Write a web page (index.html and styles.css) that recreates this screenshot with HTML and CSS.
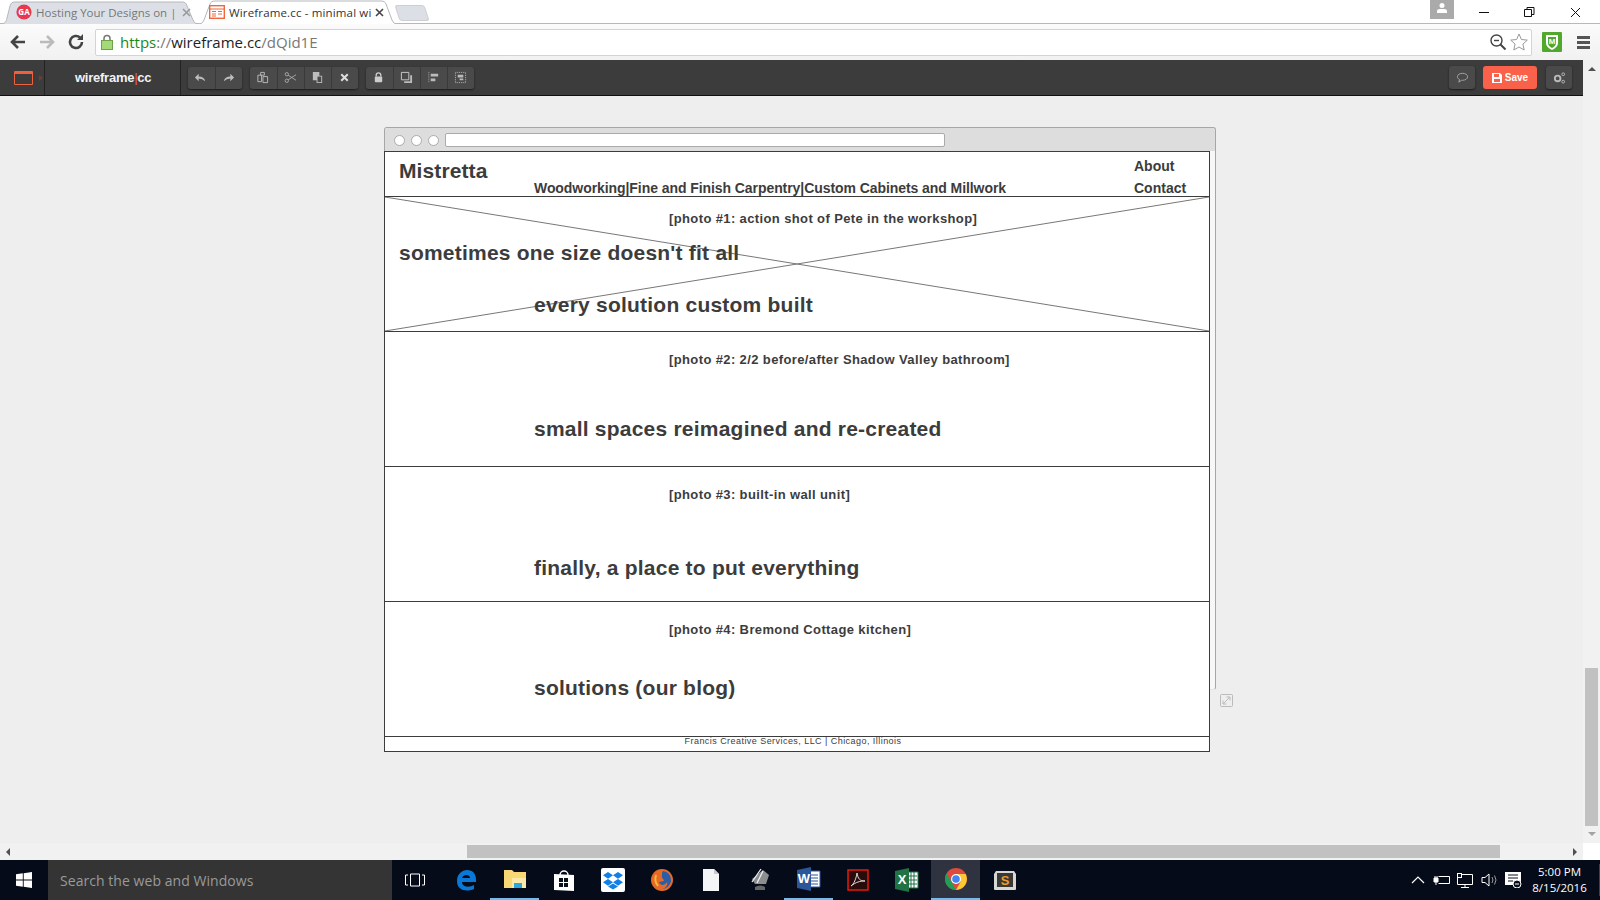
FILE: index.html
```html
<!DOCTYPE html>
<html lang="en">
<head>
    <meta charset="UTF-8">
    <title>Wireframe.cc - minimal wireframing tool</title>
    <link rel="stylesheet" href="styles.css">
</head>
<body>
    <div class="tabstrip">
        <div class="tab tab-off">
            <svg class="tab-shape" viewBox="0 0 200 24" preserveAspectRatio="none"><path d="M0 24 C5 24 6 22 7 18 L10 6 C11 3 12 2 15 2 H182 C185 2 186 3 187 6 L193 20 C194 23 196 24 200 24" fill="#dce0e6" stroke="#b4b7bb"/></svg>
            <svg class="favicon" viewBox="0 0 16 16"><circle cx="8" cy="8" r="7.6" fill="#e8384f"/><text x="8" y="11" class="favicon-text">GA</text></svg>
            <span class="tab-title tab-title-off">Hosting Your Designs on |</span>
            <svg class="tab-close" viewBox="0 0 9 9"><path d="M1 1l7 7M8 1L1 8" stroke="#999" stroke-width="1.600"/></svg>
        </div>
        <div class="tab tab-on">
            <svg class="tab-shape" viewBox="0 0 201 24" preserveAspectRatio="none"><path d="M0 24 C4 24 6 23 7 20 L13 4 C14 2 15 1 18 1 H184 C187 1 188 2 189 4 L195 20 C196 23 198 24 201 24" fill="#fff" stroke="#b4b7bb"/></svg>
            <svg class="favicon" viewBox="0 0 16 16"><rect x=".7" y="1.7" width="14.6" height="12.6" fill="#fff" stroke="#f0673d" stroke-width="1.4"/><path d="M1 5h14M3 7.5h4M3 10h4M3 12h4M9 7.5h4M9 10h4" stroke="#f0673d"/></svg>
            <span class="tab-title">Wireframe.cc - minimal wi</span>
            <svg class="tab-close" viewBox="0 0 9 9"><path d="M1 1l7 7M8 1L1 8" stroke="#444" stroke-width="1.600"/></svg>
        </div>
        <div class="new-tab"></div>
        <div class="window-controls">
            <div class="user-badge"><svg viewBox="0 0 12 12" width="12" height="12"><circle cx="6" cy="3.5" r="2.5" fill="#fff"/><path d="M1 11V9q0-2 3-2h4q3 0 3 2v2z" fill="#fff"/></svg></div>
            <svg class="win-btn" viewBox="0 0 46 24"><path d="M19 12.500h10" stroke="#111"/></svg>
            <svg class="win-btn" viewBox="0 0 46 24"><path d="M18.500 9.500h7v7h-7zM21 9V7.500h7v7h-2" fill="none" stroke="#111"/></svg>
            <svg class="win-btn" viewBox="0 0 46 24"><path d="M19 8l9 9M28 8l-9 9" stroke="#111"/></svg>
        </div>
    </div>

    <div class="toolbar">
        <svg class="nav-icon" viewBox="0 0 20 20"><path d="M17 10H5M10 4l-6 6 6 6" fill="none" stroke="#444" stroke-width="2.600"/></svg>
        <svg class="nav-icon" viewBox="0 0 20 20"><path d="M3 10h12M10 4l6 6-6 6" fill="none" stroke="#bbb" stroke-width="2.600"/></svg>
        <svg class="nav-icon" viewBox="0 0 20 20"><path d="M16 10a6 6 0 1 1-2-4.500" fill="none" stroke="#444" stroke-width="2.600"/><path d="M11 8h6V2z" fill="#444"/></svg>
        <div class="omnibox">
            <svg class="lock" viewBox="0 0 12 16"><path d="M3 7V4.500a3 3 0 0 1 6 0V7" fill="none" stroke="#777" stroke-width="1.500"/><rect x=".5" y="6.500" width="11" height="9" fill="#a3d977" stroke="#6fa04a"/></svg>
            <span class="url"><span class="url-scheme">https</span><span class="url-dim">://</span>wireframe.cc<span class="url-dim">/dQid1E</span></span>
            <svg class="omni-icon omni-zoom" viewBox="0 0 18 18"><circle cx="7.500" cy="7.500" r="5.500" fill="none" stroke="#444" stroke-width="1.400"/><path d="M5 7.500h5" stroke="#444" stroke-width="1.400"/><path d="M11.500 11.500l5 5" stroke="#444" stroke-width="2"/></svg>
            <svg class="omni-icon" viewBox="0 0 18 18"><path d="M9 1l2.400 5.500 5.900.6-4.400 4 1.300 5.900L9 14l-5.200 3 1.300-5.900-4.400-4 5.900-.6z" fill="#fff" stroke="#999"/></svg>
        </div>
        <svg class="shield" viewBox="0 0 20 20"><rect width="20" height="20" rx="1" fill="#52a82d"/><path d="M4 3h12v8q0 4-6 7-6-3-6-7z" fill="#fff"/><path d="M6 5h8v6q0 3-4 5-4-2-4-5z" fill="#52a82d"/><text x="10" y="12" class="shield-text">M</text></svg>
        <div class="menu-icon"><i></i><i></i><i></i></div>
    </div>

    <div class="viewport">
        <div class="app">
            <div class="appbar">
                <div class="app-logo">
                    <span class="app-logo-box"></span>
                    <span class="app-logo-arrow"></span>
                </div>
                <div class="app-name">wireframe<span class="app-name-bar">|</span>cc</div>
                <div class="tool-group">
                    <div class="tool"><svg viewBox="0 0 14 14"><path d="M12 11Q11 6 5 6V3L1 7l4 4V8q4 0 7 3z"/></svg></div>
                    <div class="tool"><svg viewBox="0 0 14 14"><path d="M2 11q1-5 7-5V3l4 4-4 4V8q-4 0-7 3z"/></svg></div>
                </div>
                <div class="tool-group">
                    <div class="tool"><svg viewBox="0 0 14 14"><path d="M5 1.500h4v3H5zM2 4.500h4v7H2zM7.500 6h5v6.500h-5z" fill="none" stroke="#bbb"/></svg></div>
                    <div class="tool"><svg viewBox="0 0 14 14"><circle cx="3" cy="3.500" r="1.800" fill="none" stroke="#aaa"/><circle cx="3" cy="10.500" r="1.800" fill="none" stroke="#aaa"/><path d="M4.500 4.500L13 10M4.500 9.500L13 4" stroke="#aaa"/></svg></div>
                    <div class="tool"><svg viewBox="0 0 14 14"><path d="M2 1h7v4h3v8H6v-3H2z"/><path d="M7 6h4v6H7z" fill="#4a4a4a"/></svg></div>
                    <div class="tool"><svg viewBox="0 0 14 14"><path d="M3.500 3.500l7 7M10.500 3.500l-7 7" stroke="#ddd" stroke-width="2.200"/></svg></div>
                </div>
                <div class="tool-group">
                    <div class="tool"><svg viewBox="0 0 14 14"><path d="M4.500 6V4.500a2.500 2.500 0 0 1 5 0V6" fill="none" stroke="#ccc" stroke-width="1.400"/><rect x="3" y="6" width="8" height="6" rx="1" fill="#ccc"/></svg></div>
                    <div class="tool"><svg viewBox="0 0 14 14"><path d="M1.500 1.500h8v8h-8z" fill="none" stroke="#ccc"/><path d="M11 4.500h2v8.500H4.500v-2H11z" fill="#bbb"/></svg></div>
                    <div class="tool"><svg viewBox="0 0 14 14"><path d="M2 1v12" stroke="#aaa" stroke-dasharray="1 1"/><path d="M4 3h8v3H4zM4 8h5v3H4z" fill="#bbb"/></svg></div>
                    <div class="tool"><svg viewBox="0 0 14 14"><path d="M1.500 1.500h11v11h-11z" fill="none" stroke="#bbb" stroke-dasharray="1 1"/><path d="M4 4h6v3H4zM6 8h4v2H6z" fill="#bbb"/></svg></div>
                </div>
                <div class="appbar-right">
                    <div class="tool tool-single"><svg viewBox="0 0 14 14"><path d="M7 2.500c3 0 5.500 1.500 5.500 3.700S10 10 7 10l-1 0-3 2 .8-2.800C2.300 8.500 1.500 7.400 1.500 6.200 1.500 4 4 2.500 7 2.500z" fill="none" stroke="#aaa"/></svg></div>
                    <div class="save-btn"><svg viewBox="0 0 10 10" width="10" height="10"><path d="M0 0h8l2 2v8H0z" fill="#fff"/><path d="M2 1h5v3H2zM2 6h6v3H2z" fill="#f9614a"/></svg>Save</div>
                    <div class="tool tool-single tool-settings"><svg viewBox="0 0 14 14"><circle cx="5" cy="8" r="3" fill="none" stroke="#bbb" stroke-width="2"/><circle cx="11" cy="11.500" r="1.500" fill="none" stroke="#bbb"/><circle cx="11" cy="3.500" r="1.500" fill="none" stroke="#bbb"/></svg></div>
                </div>
            </div>
            <div class="canvas">
                <div class="sketch-window">
                    <div class="sketch-titlebar">
                        <i class="sketch-dot"></i><i class="sketch-dot"></i><i class="sketch-dot"></i>
                        <div class="sketch-address"></div>
                    </div>
                </div>
                <div class="sketch-page">
                    <div class="site-header">
                        <div class="brand">Mistretta</div>
                        <div class="services">Woodworking|Fine and Finish Carpentry|Custom Cabinets and Millwork</div>
                        <div class="site-nav">
                            <div>About</div>
                            <div>Contact</div>
                        </div>
                    </div>
                    <div class="band">
                        <svg class="placeholder-x" viewBox="0 0 100 100" preserveAspectRatio="none"><path d="M0 0L100 100M0 100L100 0" stroke="#777" stroke-width="1" vector-effect="non-scaling-stroke" fill="none"/></svg>
                        <div class="caption">[photo #1: action shot of Pete in the workshop]</div>
                        <div class="headline headline-left">sometimes one size doesn't fit all</div>
                        <div class="headline headline-second">every solution custom built</div>
                    </div>
                    <div class="band">
                        <div class="caption caption-low">[photo #2: 2/2 before/after Shadow Valley bathroom]</div>
                        <div class="headline headline-a">small spaces reimagined and re-created</div>
                    </div>
                    <div class="band">
                        <div class="caption caption-low">[photo #3: built-in wall unit]</div>
                        <div class="headline headline-b">finally, a place to put everything</div>
                    </div>
                    <div class="band">
                        <div class="caption caption-low">[photo #4: Bremond Cottage kitchen]</div>
                        <div class="headline headline-c">solutions (our blog)</div>
                    </div>
                    <div class="site-footer">Francis Creative Services, LLC | Chicago, Illinois</div>
                </div>
                <svg class="resize-handle" viewBox="0 0 13 13"><rect x=".5" y=".5" width="12" height="12" rx="1" fill="none" stroke="#bbb"/><path d="M3 10l7-7M6.500 3H10v3.500M3 6.500V10h3.500" fill="none" stroke="#bbb"/></svg>
            </div>
        </div>
        <div class="vscroll">
            <span class="arrow-up"></span>
            <div class="vscroll-track"><div class="vscroll-thumb"></div></div>
            <span class="arrow-down"></span>
        </div>
    </div>
    <div class="hscroll">
        <span class="arrow-left"></span>
        <div class="hscroll-track"><div class="hscroll-thumb"></div></div>
        <span class="arrow-right"></span>
        <div class="scroll-corner"></div>
    </div>

    <div class="taskbar">
        <div class="start"><svg viewBox="0 0 16 16" width="16" height="16"><path d="M0 2.300l6.800-1v6.200H0zM7.700 1.200L16 0v7.500H7.700zM0 8.500h6.800v6.200l-6.800-1zM7.700 8.500H16V16l-8.300-1.200z" fill="#fff"/></svg></div>
        <div class="search">Search the web and Windows</div>
        <div class="task-items">
            <div class="task task-view"><svg viewBox="0 0 20 14" width="20" height="14"><path d="M5.500 1h9v12h-9zM3 2H.500v10H3M17 2h2.500v10H17" fill="none" stroke="#fff"/></svg></div>
            <div class="task"><svg viewBox="0 0 22 22" width="22" height="22"><path d="M2 12C2 5 7 1 12 1c6 0 9 4 9 10v2H7c0 5 7 6 12 3v4c-7 3-17 2-17-8zm5-3h8c0-4-7-4-8 0z" fill="#0a78d7"/></svg></div>
            <div class="task task-open"><svg viewBox="0 0 24 20" width="24" height="20"><path d="M1 1h8l2 2h12v16H1z" fill="#f8d775"/><path d="M9 9h14v10H9z" fill="#fbe9a8"/><path d="M11 14h8v5h-8z" fill="#2aa6e0"/></svg></div>
            <div class="task"><svg viewBox="0 0 22 24" width="22" height="24"><path d="M7 7a4 4 0 0 1 8 0" fill="none" stroke="#fff" stroke-width="1.500"/><path d="M1 6l20 1v16L1 22z" fill="#fff"/><path d="M6 10h4v4H6zM11 10h4v4h-4zM6 15h4v4H6zM11 15h4v4h-4z" fill="#0a0f1e"/></svg></div>
            <div class="task"><svg viewBox="0 0 24 24" width="24" height="24"><rect width="24" height="24" rx="2" fill="#fff"/><path d="M7 4l5 3.300-5 3.400L2 7.300zM17 4l5 3.300-5 3.400-5-3.400zM7 11l5 3.300-5 3.400-5-3.400zM17 11l5 3.300-5 3.400-5-3.400zM7 18.600l5-3 5 3-5 3z" fill="#1080e8"/></svg></div>
            <div class="task"><svg viewBox="0 0 22 22" width="22" height="22"><circle cx="11" cy="11" r="11" fill="#e66a25"/><path d="M12 2a9 9 0 0 1 8 10c-1 5-5 8-9 8 4-1 6-4 5-7-1 2-3 3-5 3-2-1-3-2-3-3l5-1c0-2-3-3-2-6 0-2 0-3 1-4z" fill="#2a5ea8"/><path d="M5 6q-2 6 2 11" stroke="#f6b73c" stroke-width="2" fill="none"/></svg></div>
            <div class="task"><svg viewBox="0 0 16 22" width="16" height="22"><path d="M0 0h11l5 5v17H0z" fill="#f4f5f7"/><path d="M11 0v5h5z" fill="#c8cace"/></svg></div>
            <div class="task"><svg viewBox="0 0 22 24" width="22" height="24"><path d="M3 11L14 2l6 5-3 9H6z" fill="#8b8d90"/><path d="M3 14L12 1M8 15l6-12" stroke="#eee" stroke-width="1.300"/><path d="M6 19q5-3 10 0v3H6z" fill="#666"/></svg></div>
            <div class="task task-open"><svg viewBox="0 0 24 24" width="24" height="24"><path d="M9 4h14v16H9z" fill="#fff" stroke="#2b579a"/><path d="M12 8h9M12 11h9M12 14h9M12 17h9" stroke="#2b579a"/><path d="M0 3l14-3v24L0 21z" fill="#2b579a"/><text x="7" y="16" class="tile-letter">W</text></svg></div>
            <div class="task"><svg viewBox="0 0 22 22" width="22" height="22"><rect x="1" y="1" width="20" height="20" fill="#2a0b0b" stroke="#e31b0c" stroke-width="1.500"/><path d="M4 17c3-2 5-7 6-13 1 6 3 8 8 8-5 0-9 1-14 5z" fill="none" stroke="#ddd"/></svg></div>
            <div class="task"><svg viewBox="0 0 24 24" width="24" height="24"><path d="M10 4h13v16H10z" fill="#fff" stroke="#217346"/><path d="M13 8h9M13 12h9M13 16h9M16 4v16M19 4v16" stroke="#217346"/><path d="M0 3l14-3v24L0 21z" fill="#217346"/><text x="7" y="16" class="tile-letter">X</text></svg></div>
            <div class="task task-open task-active"><svg viewBox="0 0 22 22" width="22" height="22"><circle cx="11" cy="11" r="11" fill="#de4b3e"/><path d="M11 6h9.700A11 11 0 0 1 11 22l4.500-8z" fill="#fcc934"/><path d="M11 22A11 11 0 0 1 1.500 5.500L6.500 14z" fill="#1f9e55"/><circle cx="11" cy="11" r="5" fill="#fff"/><circle cx="11" cy="11" r="3.800" fill="#4285f4"/></svg></div>
            <div class="task"><svg viewBox="0 0 22 20" width="22" height="20"><path d="M2 1h18l2 3v15q0 1-1 1H1q-1 0-1-1V4z" fill="#d8d8d6"/><rect x="3" y="3" width="16" height="14" fill="#3b3934"/><text x="11" y="14.500" class="tile-sublime">S</text></svg></div>
        </div>
        <div class="tray">
            <svg class="tray-chevron" viewBox="0 0 14 8" width="14" height="8"><path d="M1 7l6-6 6 6" fill="none" stroke="#fff" stroke-width="1.200"/></svg>
            <svg viewBox="0 0 18 12" width="18" height="12"><path d="M5.500 2.500h11v7h-11" fill="none" stroke="#fff"/><path d="M1 4h4v4H1zM2 2v2M4 2v2M3 8v3" stroke="#fff" fill="#fff"/></svg>
            <svg viewBox="0 0 18 15" width="18" height="15"><path d="M.500 1.500h15v10H.500zM8 11.500v3M4 14.500h8" fill="none" stroke="#fff"/><rect x=".5" y=".5" width="4" height="4" fill="#0a0f1e" stroke="#fff"/></svg>
            <svg viewBox="0 0 18 14" width="18" height="14"><path d="M1 4.500h3L8 1v12L4 9.500H1z" fill="none" stroke="#fff"/><path d="M11 4q2 3 0 6M13.500 2.500q3 4.500 0 9" fill="none" stroke="#999"/></svg>
            <svg viewBox="0 0 17 16" width="17" height="16"><path d="M0 0h16v13H0z" fill="#fff"/><path d="M3 3h10M3 6h10M3 9h5" stroke="#0a0f1e"/><circle cx="12" cy="12" r="4" fill="#0a0f1e" stroke="#fff"/><path d="M10 12h4" stroke="#fff"/></svg>
        </div>
        <div class="clock">
            <div>5:00 PM</div>
            <div>8/15/2016</div>
        </div>
    </div>
</body>
</html>
```

FILE: styles.css
```css
* {
    box-sizing: border-box;
}
body {
    margin: 0;
    width: 1600px;
    height: 900px;
    overflow: hidden;
    display: flex;
    flex-direction: column;
    background-color: #eeeeee;
    font-family: "Liberation Sans", Arial, sans-serif;
}

/* browser chrome */
.tabstrip {
    height: 24px;
    display: flex;
    align-items: flex-end;
    background-color: #ffffff;
    box-shadow: inset 0 -1px #b8b8b8;
    flex: none;
}
.tab {
    height: 24px;
    display: flex;
    align-items: center;
    position: relative;
    font-family: "Open Sans", sans-serif;
    font-size: 11.5px;
    white-space: nowrap;
}
.tab-off {
    width: 200px;
    padding-left: 16px;
}
.tab-on {
    width: 201px;
    margin-left: -3px;
    padding-left: 12px;
}
.tab-shape {
    position: absolute;
    left: 0;
    top: 0;
    width: 100%;
    height: 24px;
}
.favicon {
    width: 16px;
    height: 16px;
    position: relative;
    flex: none;
}
.favicon-text {
    font-size: 8px;
    font-weight: bold;
    fill: #fff;
    text-anchor: middle;
}
.tab-title {
    position: relative;
    margin-left: 4px;
    width: 140px;
    color: #333;
    letter-spacing: 0.15px;
}
.tab-title-off {
    color: #777;
    letter-spacing: 0;
}
.tab-close {
    position: relative;
    margin-left: 6px;
    width: 9px;
    height: 9px;
}
.new-tab {
    width: 30px;
    height: 16px;
    margin: 0 0 3px -1px;
    background-color: #dce0e6;
    border: 1px solid #cbced3;
    border-radius: 3px;
    transform: skewX(18deg);
}
.window-controls {
    margin-left: auto;
    height: 24px;
    display: flex;
    align-items: flex-start;
    padding-right: 2px;
}
.user-badge {
    width: 24px;
    height: 19px;
    margin-right: 6px;
    background-color: #aaaaaa;
    display: flex;
    justify-content: center;
    padding-top: 2px;
}
.win-btn {
    width: 46px;
    height: 24px;
}

.toolbar {
    height: 36px;
    flex: none;
    display: flex;
    align-items: center;
    padding-left: 8px;
    background: linear-gradient(#fbfbfb, #f1f1f1);
}
.nav-icon {
    width: 20px;
    height: 20px;
    margin-right: 9px;
}
.omnibox {
    width: 1437px;
    height: 27px;
    display: flex;
    align-items: center;
    padding: 0 3px 0 5px;
    background-color: #ffffff;
    border: 1px solid #d4d4d4;
    border-radius: 2px;
}
.lock {
    width: 12px;
    height: 16px;
    flex: none;
}
.url {
    margin: 0 0 1px 7px;
    font-family: "Open Sans", sans-serif;
    font-size: 15px;
    color: #222;
}
.url-scheme {
    color: #1a8a1a;
}
.url-dim {
    color: #777;
}
.omni-icon {
    width: 18px;
    height: 18px;
    margin-left: 3px;
}
.omni-zoom {
    margin-left: auto;
}
.shield {
    width: 20px;
    height: 20px;
    margin-left: 10px;
}
.shield-text {
    font-size: 8px;
    font-weight: bold;
    fill: #fff;
    text-anchor: middle;
}
.menu-icon {
    margin-left: 15px;
    width: 13px;
    display: flex;
    flex-direction: column;
    gap: 2px;
}
.menu-icon i {
    display: block;
    height: 3px;
    background-color: #555;
}

/* wireframe.cc bar */
.viewport {
    flex: 1;
    display: flex;
    min-height: 0;
}
.app {
    flex: 1;
    display: flex;
    flex-direction: column;
}
.appbar {
    height: 36px;
    flex: none;
    display: flex;
    align-items: center;
    background-color: #3c3c3c;
    border-bottom: 1px solid #111;
    padding-right: 11px;
}
.app-logo {
    width: 45px;
    height: 100%;
    display: flex;
    align-items: center;
    padding-left: 14px;
    border-right: 1px solid #222;
}
.app-logo-box {
    width: 19px;
    height: 14px;
    border: 1.5px solid #f0603f;
    border-top-width: 3px;
    border-radius: 1px;
}
.app-logo-arrow {
    flex: none;
    margin-left: 6px;
    border-left: 4px solid #6b3f35;
    border-top: 3px solid transparent;
    border-bottom: 3px solid transparent;
}
.app-name {
    width: 136px;
    height: 100%;
    line-height: 35px;
    padding-left: 30px;
    border-right: 1px solid #222;
    color: #f2f2f2;
    font-size: 13px;
    font-weight: bold;
    letter-spacing: -0.25px;
}
.app-name-bar {
    color: #f0603f;
    font-weight: normal;
}
.tool-group {
    display: flex;
    margin-left: 8px;
    border-radius: 3px;
    box-shadow: 0 1px 2px #1c1c1c;
}
.app-name + .tool-group {
    margin-left: 7px;
}
.tool {
    width: 27px;
    height: 22px;
    display: flex;
    align-items: center;
    justify-content: center;
    padding-right: 2px;
    background-color: #4a4a4a;
    border-left: 1px solid #3a3a3a;
}
.tool:first-child {
    border-left: none;
    border-radius: 3px 0 0 3px;
}
.tool:last-child {
    border-radius: 0 3px 3px 0;
}
.tool svg {
    width: 13px;
    height: 13px;
    fill: #bdbdbd;
}
.appbar-right {
    margin-left: auto;
    display: flex;
    align-items: center;
    gap: 8px;
}
.tool.tool-single {
    width: 26px;
    height: 23px;
    padding-right: 0;
    border-radius: 3px;
    border-left: none;
    box-shadow: 0 1px 2px #1c1c1c;
}
.tool-settings {
    margin-left: 1px;
}
.save-btn {
    width: 54px;
    height: 23px;
    display: flex;
    align-items: center;
    justify-content: center;
    gap: 3px;
    background-color: #f9614a;
    border-radius: 3px;
    color: #ffffff;
    font-size: 10px;
    font-weight: bold;
}

/* canvas with the sketch on it */
.canvas {
    flex: 1;
    position: relative;
}
.sketch-window {
    position: absolute;
    left: 384px;
    top: 31px;
    width: 832px;
    height: 563px;
    background-color: #f7f7f7;
    border: 1px solid #a6a6a6;
    border-bottom-color: #e4e4e4;
    border-radius: 3px;
}
.sketch-titlebar {
    height: 23px;
    display: flex;
    align-items: center;
    padding: 1px 0 0 9px;
    background-color: #dddddd;
    border-radius: 3px 3px 0 0;
}
.sketch-dot {
    width: 11px;
    height: 11px;
    margin-right: 6px;
    background-color: #ffffff;
    border: 1px solid #aaaaaa;
    border-radius: 50%;
}
.sketch-address {
    width: 500px;
    height: 14px;
    background-color: #ffffff;
    border: 1px solid #aaaaaa;
    border-radius: 2px;
}
.sketch-page {
    position: absolute;
    left: 384px;
    top: 55px;
    width: 826px;
    height: 601px;
    display: flex;
    flex-direction: column;
    background-color: #ffffff;
    border: 1px solid #3c3c3c;
    color: #3c3c3c;
    font-weight: bold;
}
.site-header {
    height: 45px;
    flex: none;
    display: flex;
    padding-left: 14px;
    border-bottom: 1px solid #3c3c3c;
}
.brand {
    width: 135px;
    padding-top: 7px;
    font-size: 21px;
    line-height: 24px;
    letter-spacing: 0.1px;
}
.services {
    width: 600px;
    align-self: flex-end;
    font-size: 14px;
    line-height: 16px;
    letter-spacing: -0.07px;
    white-space: nowrap;
}
.site-nav {
    padding-top: 3px;
    font-size: 14px;
    line-height: 22px;
}
.band {
    height: 135px;
    flex: none;
    position: relative;
    border-bottom: 1px solid #3c3c3c;
}
.placeholder-x {
    position: absolute;
    left: 0;
    top: 0;
    width: 100%;
    height: 100%;
}
.caption {
    position: relative;
    margin-left: 284px;
    padding-top: 14px;
    font-size: 13px;
    line-height: 16px;
    letter-spacing: 0.38px;
}
.caption-low {
    padding-top: 20px;
}
.headline {
    position: relative;
    margin-left: 149px;
    font-size: 21px;
    line-height: 26px;
    letter-spacing: 0.22px;
}
.headline-left {
    margin-left: 14px;
    margin-top: 13px;
}
.headline-second {
    margin-top: 26px;
}
.headline-a {
    margin-top: 48px;
}
.headline-b {
    margin-top: 52px;
}
.headline-c {
    margin-top: 37px;
}
.site-footer {
    flex: 1;
    font-size: 9px;
    font-weight: normal;
    line-height: 8px;
    text-align: center;
    padding-right: 8px;
    letter-spacing: 0.45px;
}
.resize-handle {
    position: absolute;
    left: 1220px;
    top: 598px;
    width: 13px;
    height: 13px;
}

/* page scrollbars */
.vscroll {
    width: 17px;
    flex: none;
    display: flex;
    flex-direction: column;
    align-items: center;
    background-color: #f1f1f1;
}
.vscroll-track {
    flex: 1;
    width: 100%;
    display: flex;
    align-items: flex-end;
    padding: 0 2px;
}
.vscroll-thumb {
    width: 13px;
    height: 158px;
    background-color: #c1c1c1;
}
.arrow-up {
    margin: 7px 0 3px;
    border-left: 4px solid transparent;
    border-right: 4px solid transparent;
    border-bottom: 4px solid #505050;
}
.arrow-down {
    margin: 6px 0 7px;
    border-left: 4px solid transparent;
    border-right: 4px solid transparent;
    border-top: 4px solid #a3a3a3;
}
.hscroll {
    height: 17px;
    flex: none;
    display: flex;
    align-items: center;
    background-color: #f1f1f1;
}
.hscroll-track {
    flex: 1;
    height: 13px;
    padding-left: 451px;
    padding-right: 68px;
}
.hscroll-thumb {
    height: 13px;
    background-color: #c1c1c1;
}
.arrow-left {
    margin: 0 6px;
    border-top: 4px solid transparent;
    border-bottom: 4px solid transparent;
    border-right: 4px solid #505050;
}
.arrow-right {
    margin: 0 6px 0 5px;
    border-top: 4px solid transparent;
    border-bottom: 4px solid transparent;
    border-left: 4px solid #505050;
}
.scroll-corner {
    width: 17px;
    height: 17px;
    background-color: #ffffff;
}

/* windows taskbar */
.taskbar {
    height: 40px;
    flex: none;
    display: flex;
    align-items: center;
    background-color: #060b1a;
    color: #ffffff;
}
.start {
    width: 48px;
    display: flex;
    justify-content: center;
}
.search {
    width: 344px;
    height: 40px;
    line-height: 42px;
    padding-left: 12px;
    background-color: #343434;
    color: #9a9a9a;
    font-family: "Open Sans", sans-serif;
    font-size: 14px;
    letter-spacing: 0.05px;
}
.task-items {
    display: flex;
}
.task {
    width: 49px;
    height: 40px;
    display: flex;
    align-items: center;
    justify-content: center;
}
.task-view {
    padding-right: 3px;
}
.task-open {
    border-bottom: 2px solid #76b9ed;
}
.task-active {
    background-color: #2f333f;
}
.tile-letter {
    font-size: 13px;
    font-weight: bold;
    fill: #fff;
    text-anchor: middle;
}
.tile-sublime {
    font-size: 13px;
    font-weight: bold;
    fill: #f09a30;
    text-anchor: middle;
}
.tray {
    margin-left: auto;
    display: flex;
    align-items: center;
    gap: 6px;
}
.tray-chevron {
    margin-right: 2px;
}
.clock {
    width: 78px;
    padding: 0 5px 0 3px;
    font-family: "Open Sans", sans-serif;
    font-size: 11.5px;
    line-height: 16px;
    text-align: center;
    border-right: 1px solid #3a4050;
}
```
